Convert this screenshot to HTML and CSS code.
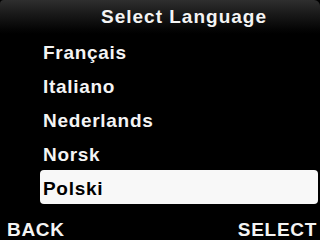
FILE: index.html
```html
<!DOCTYPE html>
<html>
<head>
<meta charset="utf-8">
<link rel="stylesheet" href="styles.css">
</head>
<body>
<div class="screen">
  <div class="header"><span class="title">Select Language</span></div>
  <ul class="list">
    <li class="item">Français</li>
    <li class="item">Italiano</li>
    <li class="item">Nederlands</li>
    <li class="item">Norsk</li>
    <li class="item selected">Polski</li>
  </ul>
  <div class="footer">
    <span class="softkey">BACK</span>
    <span class="softkey">SELECT</span>
  </div>
</div>
</body>
</html>
```
FILE: styles.css
```css
html, body {
  margin: 0;
  padding: 0;
  background: #000;
}
.screen {
  width: 320px;
  height: 240px;
  overflow: hidden;
  background: #000;
  color: #f4f4f4;
  font-family: "Liberation Sans", Arial, sans-serif;
  font-weight: bold;
  font-size: 19px;
  letter-spacing: 0.7px;
  display: flex;
  flex-direction: column;
}
.header {
  height: 34px;
  flex: none;
  box-sizing: border-box;
  padding-left: 48px;
  line-height: 34px;
  text-align: center;
  letter-spacing: 1px;
  background: linear-gradient(to bottom, #2e2e2e 0%, #1a1a1a 40%, #050505 85%, #000 100%);
  border-radius: 4px 6px 0 0;
}
.list {
  list-style: none;
  margin: 0;
  padding: 0;
  display: flex;
  flex-direction: column;
}
.item {
  height: 34px;
  box-sizing: border-box;
  padding-top: 4px;
  line-height: 30px;
  padding-left: 43px;
}
.item.selected {
  margin-left: 40px;
  margin-right: 2px;
  padding-left: 3px;
  background: #f8f8f8;
  color: #000;
  border-radius: 4px;
}
.footer {
  flex: 1;
  display: flex;
  justify-content: space-between;
  padding: 16px 3px 0 7px;
  line-height: 20px;
}
```
